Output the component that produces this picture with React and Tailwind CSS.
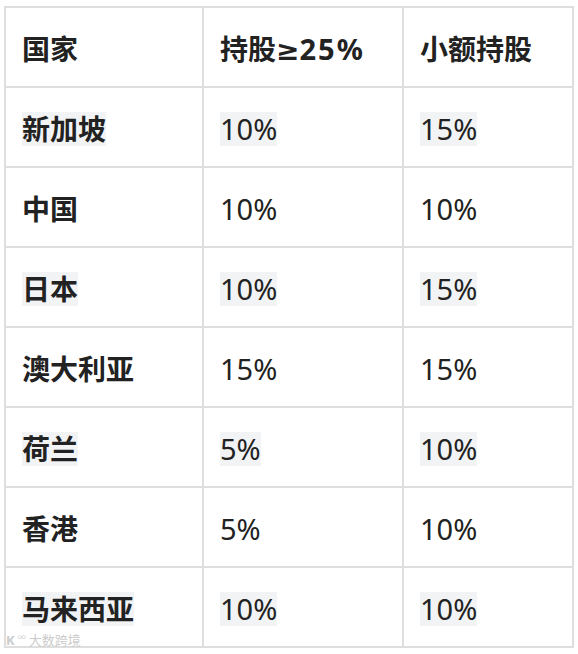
import React from "react";

const rows = [
  ["新加坡", "10%", "15%", true],
  ["中国", "10%", "10%", false],
  ["日本", "10%", "15%", true],
  ["澳大利亚", "15%", "15%", false],
  ["荷兰", "5%", "10%", true],
  ["香港", "5%", "10%", false],
  ["马来西亚", "10%", "10%", true],
];

function Mark({ on, children, bold }) {
  return (
    <span
      className={
        "inline-block leading-[34px] " +
        (on ? "bg-[#f2f3f5] " : "") +
        (bold ? "font-bold text-[28px]" : "font-normal text-[29px]")
      }
    >
      {children}
    </span>
  );
}

export default function App() {
  const font = { fontFamily: '"Noto Sans", "Noto Sans CJK SC", sans-serif' };
  return (
    <div className="w-[578px] h-[654px] bg-white relative text-[#222222]" style={font}>
      <div className="pt-[6px] pl-[4px]">
        <table className="border-collapse text-[28px] leading-none">
          <colgroup>
            <col className="w-[198px]" />
            <col className="w-[200px]" />
            <col className="w-[170px]" />
          </colgroup>
          <thead>
            <tr className="h-[80px]">
              <th className="border-2 border-[#dedede] text-left pl-[16px] pt-[4px] font-bold">国家</th>
              <th className="border-2 border-[#dedede] text-left pl-[16px] pt-[4px] font-bold whitespace-nowrap">
                持股<span className="font-['DejaVu_Sans'] text-[28px]">≥</span>
                <span className="text-[29px] tracking-[2px]">25%</span>
              </th>
              <th className="border-2 border-[#dedede] text-left pl-[16px] pt-[4px] font-bold">小额持股</th>
            </tr>
          </thead>
          <tbody>
            {rows.map(([c, a, b, hl]) => (
              <tr key={c} className="h-[80px]">
                <td className="border-2 border-[#dedede] pl-[16px] pt-[4px]">
                  <Mark on={hl} bold>{c}</Mark>
                </td>
                <td className="border-2 border-[#dedede] pl-[16px] pt-[4px]">
                  <Mark on={hl}>{a}</Mark>
                </td>
                <td className="border-2 border-[#dedede] pl-[16px] pt-[4px]">
                  <Mark on={hl}>{b}</Mark>
                </td>
              </tr>
            ))}
          </tbody>
        </table>
      </div>
      <div className="absolute left-[6px] top-[634px] flex items-center gap-[3px] text-[13px] leading-none text-[#cccccc]">
        <span className="font-bold">K</span>
        <span className="text-[8px] -mt-[7px]">∞</span>
        <span>大数跨境</span>
      </div>
    </div>
  );
}
